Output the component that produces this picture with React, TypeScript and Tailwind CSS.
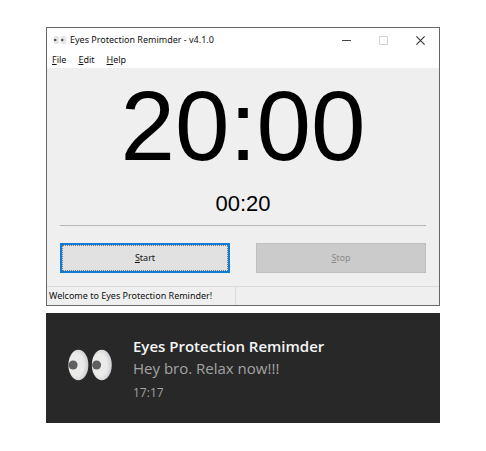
import { useId } from "react";

function Eyes({ className }: { className: string }) {
  const id = useId();
  return (
    <svg viewBox="0 0 44 32" className={className} aria-hidden="true">
      <defs>
        <radialGradient id={id} cx="0.4" cy="0.5" r="0.6">
          <stop offset="0.6" stopColor="#ebebea" />
          <stop offset="1" stopColor="#c9cbcd" />
        </radialGradient>
      </defs>
      <ellipse cx="10.4" cy="16" rx="10" ry="15.2" fill={`url(#${id})`} />
      <ellipse cx="33.8" cy="16" rx="10" ry="15.2" fill={`url(#${id})`} />
      <circle cx="5.1" cy="16" r="4.5" fill="#5f5f5f" />
      <circle cx="28.6" cy="16" r="4.5" fill="#5f5f5f" />
    </svg>
  );
}

function TitleEyes() {
  return (
    <svg viewBox="0 0 14 10" className="h-[10px] w-[14px]" aria-hidden="true">
      <ellipse cx="3.5" cy="5" rx="3" ry="4.2" fill="#e6e6e6" />
      <ellipse cx="10.5" cy="5" rx="3" ry="4.2" fill="#e6e6e6" />
      <circle cx="2.2" cy="5" r="1.3" fill="#555" />
      <circle cx="9.2" cy="5" r="1.3" fill="#555" />
    </svg>
  );
}

function MenuItem({ label }: { label: string }) {
  return (
    <button type="button">
      <span className="underline">{label[0]}</span>
      {label.slice(1)}
    </button>
  );
}

export default function App() {
  return (
    <main className="bg-white px-[46px] pt-[27px] font-['Noto_Sans','Open_Sans',sans-serif] text-[9px] leading-4 text-[#111]">
      <section className="border border-[#67676b] bg-[#efefef]">
        <header className="flex h-6 items-center bg-white pl-[6px]">
          <TitleEyes />
          <h1 className="ml-[3px] grow">Eyes Protection Remimder - v4.1.0</h1>
          <button type="button" aria-label="Minimize" className="flex w-[37px] justify-center">
            <svg viewBox="0 0 9 9" className="size-[9px]" shapeRendering="crispEdges">
              <path d="M0 4.5h9" stroke="#444" />
            </svg>
          </button>
          <button type="button" aria-label="Maximize" disabled className="flex w-[37px] justify-center">
            <svg viewBox="0 0 9 9" className="size-[9px]">
              <path d="M.5.5h8v8h-8z" fill="none" stroke="#d2d2d2" />
            </svg>
          </button>
          <button type="button" aria-label="Close" className="flex w-[37px] justify-center">
            <svg viewBox="0 0 9 9" className="size-[9px]">
              <path d="M.4.4l8.2 8.2M8.6.4L.4 8.6" stroke="#333" strokeWidth="1.1" />
            </svg>
          </button>
        </header>
        <nav className="flex h-4 items-center gap-3 bg-white pl-[5px] leading-[18px]">
          <MenuItem label="File" />
          <MenuItem label="Edit" />
          <MenuItem label="Help" />
        </nav>
        <div className="px-[13px] pt-1 pb-[13px]">
          <div className="text-center font-['Liberation_Sans',Arial,sans-serif] text-black">
            <div className="text-[98px] leading-[108px]">20:00</div>
            <div className="pt-3 text-[22px] leading-6">00:20</div>
          </div>
          <hr className="mt-[9px] border-[#b5b5b5]" />
          <div className="mt-[17px] grid grid-cols-2 gap-[26px]">
            <button type="button" className="h-[30px] border-2 border-[#0f7ad8] bg-[#e1e1e1] outline-1 -outline-offset-3 outline-dotted outline-[#777]">
              <span className="underline">S</span>tart
            </button>
            <button type="button" disabled className="h-[30px] border border-[#bfbfbf] bg-[#cbcbcb] text-[#8a8a8a]">
              <span className="underline">S</span>top
            </button>
          </div>
        </div>
        <footer className="flex h-[19px] border-t border-[#dadada] leading-[18px]">
          <p className="w-[189px] border-r border-[#dadada] pl-[2px]">Welcome to Eyes Protection Reminder!</p>
        </footer>
      </section>
      <section className="mt-[7px] flex h-[110px] items-start bg-[#282828] pl-[22px] font-['Open_Sans','Noto_Sans',sans-serif] text-[#a3a3a3]">
        <Eyes className="mt-9 h-8 w-11 shrink-0" />
        <div className="ml-[21px] pt-[22px] text-[15px] leading-[22px]">
          <h2 className="font-semibold text-[#f5f5f5]">Eyes Protection Remimder</h2>
          <p>Hey bro. Relax now!!!</p>
          <p className="pt-[3px] text-[12px]">17:17</p>
        </div>
      </section>
    </main>
  );
}
